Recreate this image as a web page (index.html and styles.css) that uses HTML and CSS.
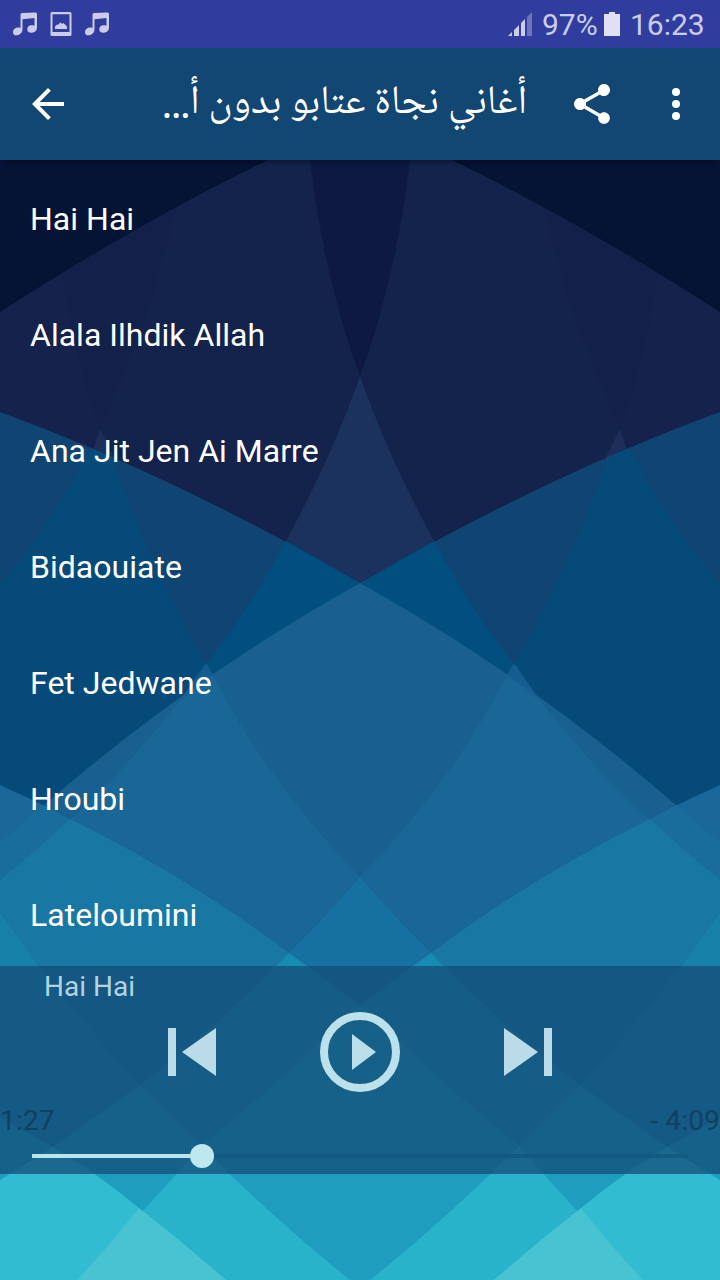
FILE: index.html
```html
<!DOCTYPE html>
<html lang="ar">
<head>
    <meta charset="UTF-8">
    <meta name="viewport" content="width=device-width, initial-scale=1.0">
    <title>أغاني نجاة عتابو</title>
    <link rel="stylesheet" href="styles.css">
</head>
<body>

<svg class="wallpaper" viewBox="0 0 720 1280" aria-hidden="true">
    <defs>
        <!-- left half, mirrored for the right one -->
        <g id="half">
            <path fill="#14234b" d="M0 160H360V600H0z"/>
            <path fill="#15224c" d="M0 300L62 275Q76 360 100 430L92 460H0z"/>
            <path fill="#13204a" d="M62 275L176 205Q155 310 100 430Q76 360 62 275z"/>
            <path fill="#051335" d="M0 160H268Q140 222 0 312z"/>
            <path fill="#0d1943" d="M310 160H360V377Q324 278 310 160z"/>
            <path fill="#1d2e5a" d="M100 429L118 465H88z"/>
            <path fill="#1b325e" d="M360 376Q333 454 286 541L360 583z"/>
            <path fill="#104573" d="M0 412Q170 474 360 583V900H0z"/>
            <path fill="#064a79" d="M91 448L112 457Q148 562 206 664L182 704L43 810L0 800V585Q52 521 91 448z"/>
            <path fill="#004f7e" d="M286 541L360 583V600L213 676L206 664Q251 607 286 541z"/>
            <path fill="#165d8f" d="M206 663L215 678L178 703z"/>
            <path fill="#196091" d="M360 583Q190 678 43 806L70 822L360 900z"/>
            <path fill="#196797" d="M213 675Q266 780 360 877V960H289L70 825V820Q120 776 178 703z"/>
            <path fill="#1a6899" d="M0 785L43 805L20 850H0z"/>
            <path fill="#186d9c" d="M43 805L70 819L80 860L0 900V843z"/>
            <path fill="#1977a4" d="M70 819Q188 877 289 953L360 1010V1280H0V880Q36 851 70 819z"/>
            <path fill="#1771a0" d="M360 877Q325 918 289 953L300 1010H360z"/>
            <path fill="#1781a9" d="M0 913Q64 1005 140 1085V1280H0z"/>
            <path fill="#188cb0" d="M289 953L360 1005V1280H140V1085Q218 1026 289 953z"/>
            <path fill="#1e9dbf" d="M360 1004V1280H0V1118L53 1147L140 1085L201 1146Q282 1080 360 1004z"/>
            <path fill="#28b3cb" d="M201 1146Q274 1219 350 1280H77Q143 1213 201 1146z"/>
            <path fill="#31bcd1" d="M0 1180L53 1147Q98 1174 139 1208L90 1280H0z"/>
            <path fill="#48c3d2" d="M139 1208Q184 1243 226 1280H77Q109 1246 139 1208z"/>
        </g>
    </defs>
    <use href="#half"/>
    <use href="#half" transform="translate(720 0) scale(-1 1)"/>
</svg>

<div class="screen">
    <div class="status-bar">
        <svg class="status-icon" viewBox="0 0 24 24"><path d="M7.500 2.200Q7.700 1.200 9 1L22.500 .5Q24 .5 24 2V15.500Q24 19.500 20 20.600Q15 21.500 14.300 18Q14 14 18 13.300Q20 13 21.500 13.500V6L9.500 7.200V17.500Q9 22 4.500 23.300Q.3 23.800 0 20.500Q0 16.500 4 15.600Q6 15.200 7.500 15.700z"/></svg>
        <svg class="status-icon" viewBox="0 0 24 24"><path fill-rule="evenodd" d="M3 0H21Q22.500 0 22.500 1.500V22.500Q22.500 24 21 24H3Q1.500 24 1.500 22.500V1.500Q1.500 0 3 0zM3.500 2.200V20H20.500V2.200zM6 17V14.500L8 12.500L9 13L11.500 10.300L13 12L14.500 11L18 14.500V17z"/></svg>
        <svg class="status-icon" viewBox="0 0 24 24"><path d="M7.500 2.200Q7.700 1.200 9 1L22.500 .5Q24 .5 24 2V15.500Q24 19.500 20 20.600Q15 21.500 14.300 18Q14 14 18 13.300Q20 13 21.500 13.500V6L9.500 7.200V17.500Q9 22 4.500 23.300Q.3 23.800 0 20.500Q0 16.500 4 15.600Q6 15.200 7.500 15.700z"/></svg>
        <svg class="signal" viewBox="0 0 24 24"><path d="M0 24L4 20V24zM6 18L11 13V24H6zM13 11L17 7V24H13z"/><path opacity=".4" d="M19 5L24 0V24H19z"/></svg>
        <span class="percent">97%</span>
        <svg class="battery" viewBox="0 0 16 24"><path d="M5 0H11V2H16V24H0V2H5z"/></svg>
        <span class="clock">16:23</span>
    </div>

    <div class="app-bar">
        <svg class="bar-icon back" viewBox="0 0 24 24"><path d="M20 11H7.830l5.590-5.590L12 4l-8 8 8 8 1.410-1.410L7.830 13H20v-2z"/></svg>
        <h1 class="title" dir="rtl">أغاني نجاة عتابو بدون أ<span class="dots">…</span></h1>
        <svg class="bar-icon share" viewBox="0 0 24 24"><path d="M18 16.080c-.760 0-1.440.300-1.960.770L8.910 12.700c.050-.230.090-.460.090-.700s-.040-.470-.090-.700l7.050-4.110c.540.500 1.250.810 2.040.810 1.660 0 3-1.340 3-3s-1.340-3-3-3-3 1.340-3 3c0 .240.040.470.090.700L8.040 9.810C7.500 9.310 6.790 9 6 9c-1.660 0-3 1.340-3 3s1.340 3 3 3c.790 0 1.500-.310 2.040-.810l7.120 4.160c-.050.210-.080.430-.080.650 0 1.610 1.310 2.920 2.920 2.920s2.920-1.310 2.920-2.920-1.310-2.920-2.920-2.920z"/></svg>
        <svg class="bar-icon more" viewBox="0 0 24 24"><circle cx="12" cy="6" r="2"/><circle cx="12" cy="12" r="2"/><circle cx="12" cy="18" r="2"/></svg>
    </div>

    <ul class="songs">
        <li>Hai Hai</li>
        <li>Alala Ilhdik Allah</li>
        <li>Ana Jit Jen Ai Marre</li>
        <li>Bidaouiate</li>
        <li>Fet Jedwane</li>
        <li>Hroubi</li>
        <li>Lateloumini</li>
    </ul>

    <div class="player">
        <div class="now-playing">Hai Hai</div>
        <div class="controls">
            <svg class="skip" viewBox="0 0 48 48"><path d="M0 0H8V48H0zM48 0V48L14 24z"/></svg>
            <svg class="play" viewBox="0 0 80 80"><circle cx="40" cy="40" r="36"/><path d="M32 22L56 40L32 58z"/></svg>
            <svg class="skip" viewBox="0 0 48 48"><path d="M40 0H48V48H40zM0 0L34 24L0 48z"/></svg>
        </div>
        <div class="times">
            <span>1:27</span>
            <span>- 4:09</span>
        </div>
        <div class="seek">
            <div class="played"></div>
            <div class="thumb"></div>
            <div class="rest"></div>
        </div>
    </div>
</div>

</body>
</html>
```
FILE: styles.css
```css
body {
    margin: 0;
    font-family: Roboto, "Noto Sans", sans-serif;
    color: #fff;
    background-color: #14234b;
}

.wallpaper {
    position: absolute;
    top: 0;
    left: 0;
    width: 720px;
    height: 1280px;
}

.screen {
    position: relative;
    display: flex;
    flex-direction: column;
    width: 720px;
    height: 1280px;
    overflow: hidden;
}

.status-bar {
    display: flex;
    align-items: center;
    height: 48px;
    box-sizing: border-box;
    padding: 0 15px 0 13px;
    background-color: #303d9f;
    color: #cacdea;
    fill: #cacdea;
    font-size: 30px;
}

.status-icon {
    width: 24px;
    height: 24px;
    margin-right: 12px;
}

.signal {
    width: 24px;
    height: 24px;
    margin-left: auto;
    margin-right: 10px;
}

.percent,
.clock {
    padding-top: 1px;
}

.percent {
    width: 56px;
    margin-right: 6px;
}

.battery {
    width: 16px;
    height: 24px;
    margin-right: 10px;
    fill: #dfe0f2;
}

.clock {
    width: 75px;
}

.app-bar {
    display: flex;
    align-items: center;
    height: 112px;
    box-sizing: border-box;
    padding: 0 20px 0 24px;
    background-color: #124673;
    box-shadow: 0 6px 6px -4px rgba(0, 0, 0, 0.4);
    fill: #fff;
}

.bar-icon {
    width: 48px;
    height: 48px;
    flex: none;
}

.title {
    flex: 1;
    margin: 0 41px 0 0;
    padding-top: 2px;
    font-family: "Noto Naskh Arabic", "Noto Naskh Arabic UI", Roboto, sans-serif;
    font-size: 40.4px;
    font-weight: normal;
    line-height: 60px;
    white-space: nowrap;
}

.dots {
    font-family: "Open Sans", sans-serif;
    font-weight: 600;
    font-size: 34px;
    line-height: 1;
    vertical-align: -5px;
}

.share {
    margin-right: 36px;
}

.songs {
    height: 806px;
    margin: 0;
    padding: 0;
    list-style: none;
    overflow: hidden;
}

.songs li {
    height: 116px;
    line-height: 119px;
    padding-left: 30px;
    font-size: 32px;
    letter-spacing: 0.02px;
}

.player {
    height: 208px;
    background-color: rgba(20, 76, 120, 0.74);
    color: #b3d3e1;
    fill: #bce0ea;
}

.now-playing {
    height: 46px;
    padding-left: 44px;
    font-size: 28px;
    line-height: 41px;
}

.controls {
    display: flex;
    justify-content: center;
    align-items: center;
    gap: 104px;
    height: 80px;
}

.skip {
    width: 48px;
    height: 48px;
    fill: #badbe7;
}

.play {
    width: 80px;
    height: 80px;
}

.play circle {
    fill: none;
    stroke: #bce1ea;
    stroke-width: 8;
}

.times {
    display: flex;
    justify-content: space-between;
    height: 52px;
    line-height: 58px;
    font-size: 28px;
    letter-spacing: 0.2px;
    color: #0f4162;
}

.seek {
    display: flex;
    align-items: center;
    height: 24px;
    padding: 0 32px;
}

.played {
    width: 158px;
    height: 4px;
    background-color: #bce4ec;
}

.thumb {
    width: 24px;
    height: 24px;
    border-radius: 50%;
    background-color: #bee8ef;
}

.rest {
    flex: 1;
    height: 4px;
    background-color: rgba(18, 84, 122, 0.7);
}
```
